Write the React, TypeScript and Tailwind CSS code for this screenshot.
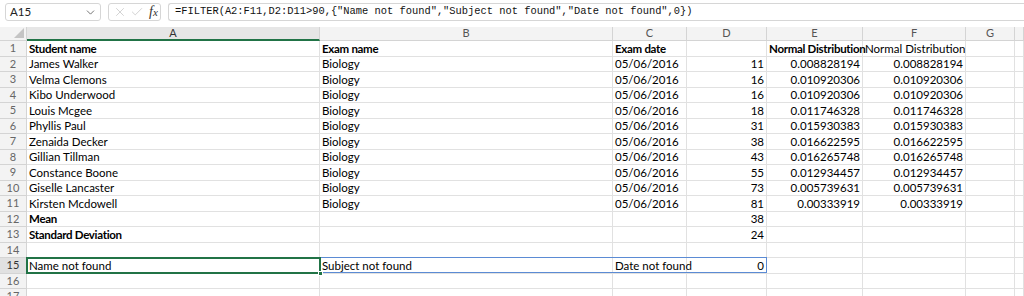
import { ChevronDown, X, Check } from "lucide-react";

const cols = [
  { key: "A", w: "w-[293px]" },
  { key: "B", w: "w-[293px]" },
  { key: "C", w: "w-[74px]" },
  { key: "D", w: "w-[80px]" },
  { key: "E", w: "w-[96px]" },
  { key: "F", w: "w-[103px]" },
  { key: "G", w: "w-[49px]" },
  { key: "", w: "flex-1" },
];

const students: [string, string, string][] = [
  ["James Walker", "11", "0.008828194"],
  ["Velma Clemons", "16", "0.010920306"],
  ["Kibo Underwood", "16", "0.010920306"],
  ["Louis Mcgee", "18", "0.011746328"],
  ["Phyllis Paul", "31", "0.015930383"],
  ["Zenaida Decker", "38", "0.016622595"],
  ["Gillian Tillman", "43", "0.016265748"],
  ["Constance Boone", "55", "0.012934457"],
  ["Giselle Lancaster", "73", "0.005739631"],
  ["Kirsten Mcdowell", "81", "0.00333919"],
];

type Cell = { text?: string; bold?: boolean; right?: boolean };

const empty = (): Cell[] => [{}, {}, {}, {}, {}, {}, {}, {}];

function buildRows(): Cell[][] {
  const rows: Cell[][] = [];
  rows.push([
    { text: "Student name", bold: true },
    { text: "Exam name", bold: true },
    { text: "Exam date", bold: true },
    {},
    { text: "Normal Distribution", bold: true },
    { text: "Normal Distribution" },
    {},
    {},
  ]);
  for (const [name, score, nd] of students) {
    rows.push([
      { text: name },
      { text: "Biology" },
      { text: "05/06/2016" },
      { text: score, right: true },
      { text: nd, right: true },
      { text: nd, right: true },
      {},
      {},
    ]);
  }
  rows.push([{ text: "Mean", bold: true }, {}, {}, { text: "38", right: true }, {}, {}, {}, {}]);
  rows.push([{ text: "Standard Deviation", bold: true }, {}, {}, { text: "24", right: true }, {}, {}, {}, {}]);
  rows.push(empty());
  rows.push([
    { text: "Name not found" },
    { text: "Subject not found" },
    { text: "Date not found" },
    { text: "0", right: true },
    {},
    {},
    {},
    {},
  ]);
  rows.push(empty());
  rows.push(empty());
  return rows;
}

const cellFont = "font-['Lato','Liberation_Sans',sans-serif] text-[11.5px]";

function Toolbar() {
  return (
    <div className="h-[27px] flex items-start pt-[3px] pl-[5px] gap-[7px] bg-white">
      <div className="w-[96px] h-[18px] border border-[#d6d6d6] rounded-[3px] flex items-center justify-between pl-[4px] pr-[3px]">
        <span className="font-['Lato',sans-serif] text-[11.5px] text-[#222]">A15</span>
        <ChevronDown className="w-[13px] h-[13px] text-[#555]" strokeWidth={1.5} />
      </div>
      <div className="w-[53px] h-[18px] border border-[#d6d6d6] rounded-[3px] flex items-center pl-[4px] gap-[3px]">
        <X className="w-[14px] h-[14px] text-[#c0c0c0]" strokeWidth={1.2} />
        <Check className="w-[14px] h-[14px] text-[#c0c0c0]" strokeWidth={1.2} />
        <span className="font-['Liberation_Serif',serif] italic text-[14px] leading-none text-[#333] ml-[2px]">
          f<span className="text-[11px]">x</span>
        </span>
      </div>
      <div className="flex-1 h-[18px] border border-[#d6d6d6] border-r-0 rounded-l-[3px] flex items-center pl-[6px]">
        <span className="font-['Liberation_Mono',monospace] text-[10.4px] text-[#111] whitespace-pre">
          {'=FILTER(A2:F11,D2:D11>90,{"Name not found","Subject not found","Date not found",0})'}
        </span>
      </div>
    </div>
  );
}

export default function App() {
  const rows = buildRows();
  return (
    <div className="w-[1024px] h-[296px] overflow-hidden bg-white">
      <Toolbar />
      <div className="relative">
        <div className="flex h-[14px] bg-[#f3f3f3] border-b border-[#d4d4d4]">
          <div className="w-[27px] border-r border-[#d4d4d4] relative">
            <div className="absolute right-[2px] bottom-[2px] w-0 h-0 border-l-[10px] border-l-transparent border-b-[10px] border-b-[#c4c4c4]" />
          </div>
          {cols.map((c, j) => (
            <div
              key={j}
              className={`${c.w} shrink-0 border-r border-[#d4d4d4] flex items-center justify-center font-['Lato',sans-serif] text-[11px] ${
                c.key === "A" ? "bg-[#e6e6e6] text-[#333] border-b-2 border-b-[#217346] -mb-px" : "text-[#555]"
              }`}
            >
              {c.key}
            </div>
          ))}
        </div>
        {rows.map((r, i) => {
          const n = i + 1;
          const h = i % 2 === 0 ? "h-[16px]" : "h-[15px]";
          return (
            <div key={n} className={`flex ${h}`}>
              <div
                className={`w-[27px] shrink-0 border-r border-b border-[#d4d4d4] flex items-center justify-center font-['Lato',sans-serif] text-[11px] ${
                  n === 15 ? "bg-[#e1e1e1] text-[#333]" : "bg-[#f3f3f3] text-[#666]"
                }`}
              >
                {n}
              </div>
              {cols.map((c, j) => {
                const cell = r[j];
                return (
                  <div
                    key={j}
                    className={`${c.w} shrink-0 border-r border-b border-[#e1e1e1] flex items-center px-[2px] whitespace-nowrap overflow-visible ${cellFont} text-black ${
                      cell.right ? "justify-end" : "justify-start"
                    } ${cell.bold ? "font-bold tracking-[-0.3px]" : ""}`}
                  >
                    {cell.text}
                  </div>
                );
              })}
            </div>
          );
        })}
        {/* spill range outline */}
        <div className="absolute left-[319px] top-[230px] w-[448px] h-[16px] border border-[#5b8bd4] pointer-events-none" />
        {/* active cell */}
        <div className="absolute left-[26px] top-[230px] w-[295px] h-[17px] border-2 border-[#217346] pointer-events-none" />
        <div className="absolute left-[318px] top-[244px] w-[5px] h-[5px] bg-[#217346] border border-white pointer-events-none" />
      </div>
    </div>
  );
}
